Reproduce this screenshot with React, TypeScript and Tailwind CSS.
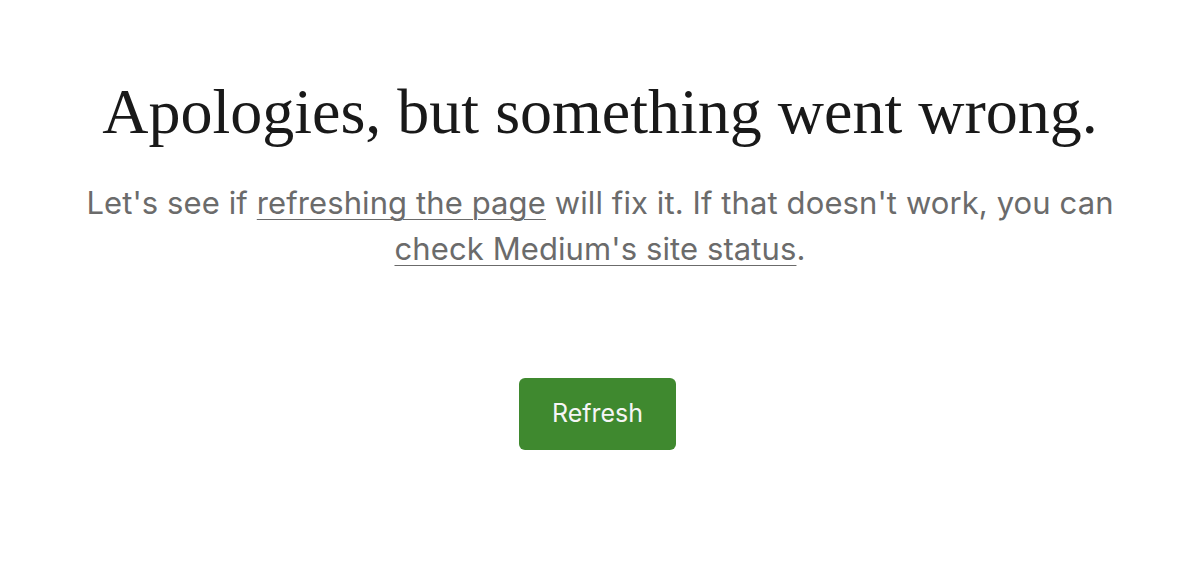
export default function App() {
  return (
    <div className="flex h-[565px] w-full flex-col items-center bg-white pt-[72px]">
      <h1 className="text-center font-['Liberation_Serif',serif] text-[64px] leading-[80px] text-[#191919]">
        Apologies, but something went wrong.
      </h1>
      <p className="mt-[28px] w-[1100px] text-center font-['Inter',sans-serif] text-[31px] leading-[46px] tracking-[0.1px] text-[#6b6b6b]">
        Let's see if{" "}
        <a href="#" className="underline underline-offset-[5px] decoration-1">
          refreshing the page
        </a>{" "}
        will fix it. If that doesn't work, you can
        <br />
        <a href="#" className="underline underline-offset-[5px] decoration-1">
          check Medium's site status
        </a>
        .
      </p>
      <button className="mt-[106px] mr-[5px] h-[72px] w-[157px] rounded-[6px] bg-[#3f892f] font-['Inter',sans-serif] text-[25px] text-[#f5f5f5]">
        Refresh
      </button>
    </div>
  );
}
